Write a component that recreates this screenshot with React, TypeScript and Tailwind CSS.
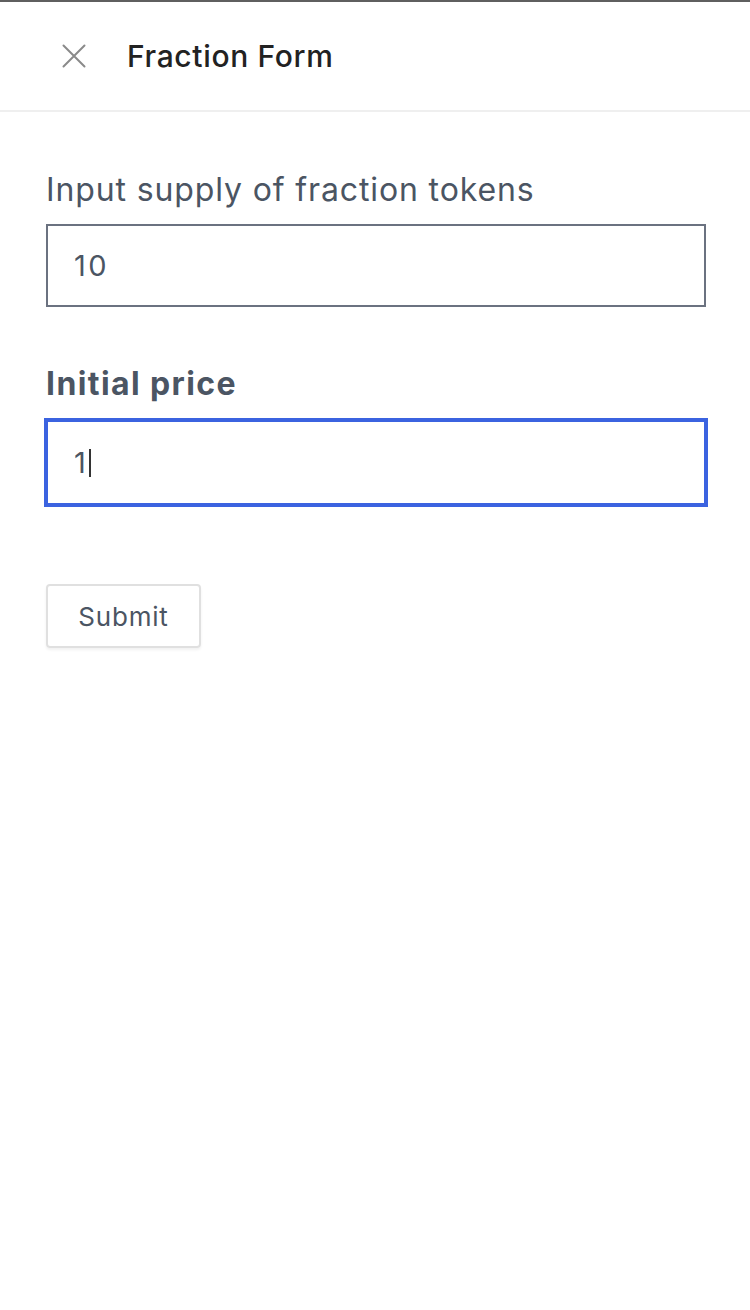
import React from "react";

export default function App() {
  return (
    <div
      className="min-h-[1310px] w-[750px] bg-white border-t-2 border-[#5f5f5f]"
      style={{ fontFamily: "Inter, 'Noto Sans', sans-serif" }}
    >
      <header className="flex h-[110px] items-center border-b-2 border-[#efefef] pl-[62px]">
        <svg width="24" height="24" viewBox="0 0 24 24" fill="none" stroke="#8a8a8a" strokeWidth="2" strokeLinecap="round">
          <path d="M1.5 1.5 L22.5 22.5 M22.5 1.5 L1.5 22.5" />
        </svg>
        <h1 className="ml-[41px] text-[30px] font-medium tracking-[0.65px] text-[#222222] leading-none">Fraction Form</h1>
      </header>
      <main className="px-[46px] pt-[58px]">
        <label className="block text-[32px] leading-[40px] tracking-[0.87px] text-[#4b5563]">Input supply of fraction tokens</label>
        <div className="mt-[14px] flex h-[83px] w-[660px] items-center border-2 border-[#6b7280] pl-[26px] text-[29px] tracking-[2.5px] text-[#4b5563]">
          10
        </div>
        <label className="mt-[57px] block text-[32px] font-bold leading-[40px] tracking-[1.4px] text-[#4b5563]">Initial price</label>
        <div className="mt-[16px] flex h-[85px] w-[660px] items-center border-2 border-[#3b63e0] pl-[26px] text-[29px] text-[#4b5563] outline-2 outline-[#3b63e0]">
          1<span className="ml-[3px] inline-block h-[28px] w-[2px] bg-[#333333]" />
        </div>
        <button className="mt-[79px] flex h-[64px] w-[155px] items-center justify-center rounded-[4px] border-2 border-[#e0e0e0] text-[26px] tracking-[0.8px] text-[#4b5563] shadow-[0_2px_3px_rgba(0,0,0,0.06)]">
          Submit
        </button>
      </main>
    </div>
  );
}
